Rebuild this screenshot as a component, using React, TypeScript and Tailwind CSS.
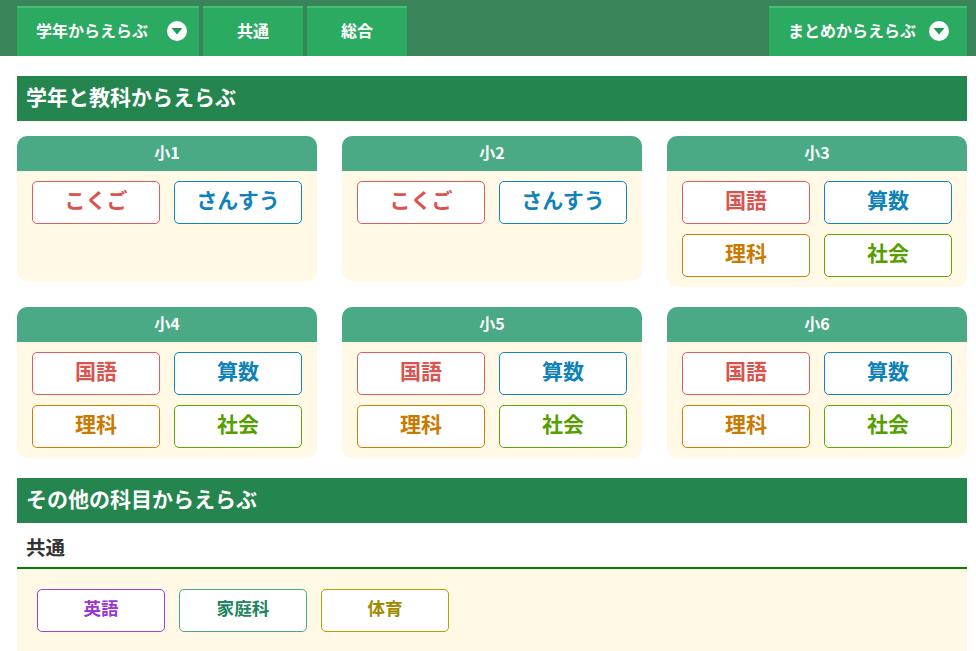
const font = { fontFamily: '"Noto Sans CJK JP", "Noto Sans", sans-serif' };

const cKokugo = "border-[#dc5f5f] text-[#d9534f]";
const cSansu = "border-[#0f87bd] text-[#0f82b8]";
const cRika = "border-[#cc7f00] text-[#c97a00]";
const cShakai = "border-[#5aa800] text-[#559f00]";

function SubjectButton({ label, color, size }: { label: string; color: string; size: string }) {
  return (
    <a className={`flex h-[43px] w-[128px] items-center justify-center rounded-[5px] border bg-white pb-[6px] font-bold leading-none ${size} ${color}`}>
      {label}
    </a>
  );
}

function Caret() {
  return (
    <svg width="20" height="20" viewBox="0 0 20 20" className="shrink-0">
      <circle cx="10" cy="10" r="10" fill="#ffffff" />
      <path d="M4.5 7h11L10 13.5z" fill="#1f9a55" />
    </svg>
  );
}

function Tab({ label, caret, className }: { label: string; caret?: boolean; className: string }) {
  return (
    <a className={`flex h-[50px] items-center border-t-2 border-[#45bd72] bg-[#2bab62] pb-[2px] text-[16px] font-bold text-white ${className}`}>
      <span className="pb-[2px]">{label}</span>
      {caret && <Caret />}
    </a>
  );
}

function Heading({ children }: { children: string }) {
  return (
    <h2 className="flex h-[45px] items-center bg-[#25854f] pb-[4px] pl-[9px] text-[21px] font-bold text-white">{children}</h2>
  );
}

function Grade({ name, subjects }: { name: string; subjects: [string, string][] }) {
  return (
    <div className="w-[300px] overflow-hidden rounded-[10px] bg-[#fff9e6]">
      <div className="flex h-[35px] items-center justify-center bg-[#4aaa86] pb-[4px] text-[16px] font-bold text-white">{name}</div>
      <div className={`flex flex-wrap content-start gap-x-[14px] gap-y-[10px] px-[15px] pt-[10px] ${subjects.length > 2 ? "pb-[10px]" : "h-[110px]"}`}>
        {subjects.map(([label, color]) => (
          <SubjectButton key={label} label={label} color={color} size="text-[21px]" />
        ))}
      </div>
    </div>
  );
}

const kana: [string, string][] = [["こくご", cKokugo], ["さんすう", cSansu]];
const kanji: [string, string][] = [["国語", cKokugo], ["算数", cSansu], ["理科", cRika], ["社会", cShakai]];

export default function App() {
  return (
    <div className="h-[651px] overflow-hidden bg-white" style={font}>
      <nav className="flex h-[56px] items-end justify-between bg-[#3a8459] pr-[9px] pl-[17px]">
        <div className="flex gap-[4px]">
          <Tab label="学年からえらぶ" caret className="w-[182px] gap-[19px] pl-[19px]" />
          <Tab label="共通" className="w-[100px] justify-center" />
          <Tab label="総合" className="w-[100px] justify-center" />
        </div>
        <Tab label="まとめからえらぶ" caret className="w-[198px] gap-[13px] pl-[19px]" />
      </nav>
      <main className="mr-[9px] ml-[17px] pt-[20px]">
        <Heading>学年と教科からえらぶ</Heading>
        <div className="mt-[15px] flex flex-wrap items-start gap-x-[25px] gap-y-[20px]">
          <Grade name="小1" subjects={kana} />
          <Grade name="小2" subjects={kana} />
          <Grade name="小3" subjects={kanji} />
          <Grade name="小4" subjects={kanji} />
          <Grade name="小5" subjects={kanji} />
          <Grade name="小6" subjects={kanji} />
        </div>
        <div className="mt-[20px]">
          <Heading>その他の科目からえらぶ</Heading>
        </div>
        <h3 className="flex h-[46px] items-center border-b-2 border-[#008000] pt-[4px] pl-[9px] text-[19.5px] font-bold text-[#333333]">共通</h3>
        <div className="flex gap-[14px] bg-[#fff9e6] p-[20px]">
          <SubjectButton label="英語" color="border-[#a040d8] text-[#9a35d6]" size="text-[17.6px]" />
          <SubjectButton label="家庭科" color="border-[#4aaa86] text-[#1f8460]" size="text-[17.6px]" />
          <SubjectButton label="体育" color="border-[#b5a000] text-[#a08c00]" size="text-[17.6px]" />
        </div>
      </main>
    </div>
  );
}
